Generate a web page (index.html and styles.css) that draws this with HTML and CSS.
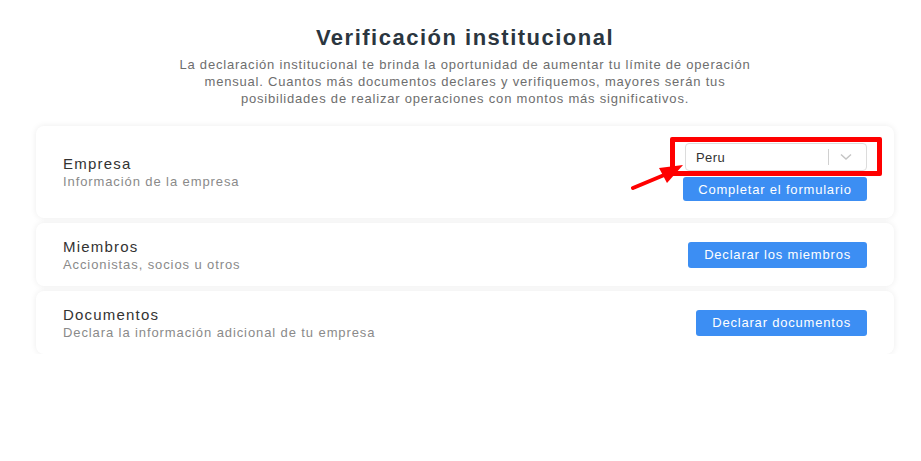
FILE: index.html
```html
<!DOCTYPE html>
<html lang="es">
<head>
    <meta charset="UTF-8">
    <meta name="viewport" content="width=device-width, initial-scale=1.0">
    <title>Verificación institucional</title>
    <link rel="stylesheet" href="styles.css">
</head>
<body>
    <main class="page">
        <header class="intro">
            <h1 class="intro-title">Verificación institucional</h1>
            <p class="intro-text">La declaración institucional te brinda la oportunidad de aumentar tu límite de operación mensual. Cuantos más documentos declares y verifiquemos, mayores serán tus posibilidades de realizar operaciones con montos más significativos.</p>
        </header>

        <section class="card">
            <div class="card-info">
                <h2 class="card-title">Empresa</h2>
                <p class="card-sub">Información de la empresa</p>
            </div>
            <div class="card-actions">
                <div class="select">
                    <span class="select-value">Peru</span>
                    <span class="select-sep"></span>
                    <svg class="select-arrow" width="12" height="8" viewBox="0 0 12 8">
                        <path d="M1 1.5 L6 6 L11 1.5" fill="none" stroke="#c4c4c4" stroke-width="1.4"/>
                    </svg>
                </div>
                <button type="button" class="btn btn-wide">Completar el formulario</button>
                <span class="mark-box"></span>
                <svg class="mark-arrow" width="60" height="32" viewBox="0 0 60 32">
                    <line x1="2" y1="29" x2="38" y2="14" stroke="#f00" stroke-width="4" stroke-linecap="round"/>
                    <polygon points="52,6 28,9 36,24" fill="#f00"/>
                </svg>
            </div>
        </section>

        <section class="card">
            <div class="card-info">
                <h2 class="card-title">Miembros</h2>
                <p class="card-sub">Accionistas, socios u otros</p>
            </div>
            <button type="button" class="btn">Declarar los miembros</button>
        </section>

        <section class="card">
            <div class="card-info">
                <h2 class="card-title">Documentos</h2>
                <p class="card-sub">Declara la información adicional de tu empresa</p>
            </div>
            <button type="button" class="btn">Declarar documentos</button>
        </section>
    </main>
</body>
</html>
```

FILE: styles.css
```css
* {
    box-sizing: border-box;
    font-family: "Liberation Sans", Arial, Helvetica, sans-serif;
}
body {
    margin: 0;
    background-color: #ffffff;
}
.page {
    width: 858px;
    margin-left: 36px;
    padding-top: 26px;
    display: flex;
    flex-direction: column;
    gap: 5px;
}
.intro {
    text-align: center;
    margin-bottom: 14px;
}
.intro-title {
    margin: 0;
    font-size: 22px;
    line-height: 24px;
    letter-spacing: 1.5px;
    color: #2b3640;
}
.intro-text {
    margin: 6px auto 0;
    width: 596px;
    font-size: 13px;
    line-height: 17px;
    letter-spacing: 0.8px;
    color: #6e6e6e;
}
.card {
    display: flex;
    align-items: center;
    justify-content: space-between;
    padding: 13.5px 27px;
    background-color: #ffffff;
    border-radius: 8px;
    box-shadow: 0 0 6px rgba(0, 0, 0, 0.08);
}
.card-title {
    margin: 0;
    font-size: 15px;
    line-height: 19px;
    font-weight: normal;
    letter-spacing: 1.2px;
    color: #333333;
}
.card-sub {
    margin: 0;
    font-size: 13px;
    line-height: 17px;
    letter-spacing: 0.9px;
    color: #8a8a8a;
}
.card-actions {
    position: relative;
    display: flex;
    flex-direction: column;
    align-items: flex-end;
    gap: 6px;
    margin: 3.5px 0;
}
.select {
    width: 182px;
    height: 28px;
    display: flex;
    align-items: center;
    padding: 0 14px 0 10px;
    border: 1px solid #dcdcdc;
    border-radius: 4px;
    background-color: #ffffff;
}
.select-value {
    flex: 1;
    font-size: 13px;
    letter-spacing: 0.4px;
    color: #333333;
}
.select-sep {
    width: 1px;
    height: 16px;
    background-color: #d0d0d0;
    margin-right: 11px;
}
.btn {
    height: 26px;
    padding: 0 16px;
    border: none;
    border-radius: 3px;
    background-color: #3c8ef3;
    color: #ffffff;
    font-size: 13px;
    letter-spacing: 0.8px;
    cursor: pointer;
}
.btn-wide {
    width: 184px;
    height: 24px;
    padding: 0;
}
.mark-box {
    position: absolute;
    left: -13px;
    top: -6px;
    width: 212px;
    height: 39px;
    border: 5px solid #ff0000;
    border-radius: 2px;
}
.mark-arrow {
    position: absolute;
    left: -52px;
    top: 16px;
}
```
